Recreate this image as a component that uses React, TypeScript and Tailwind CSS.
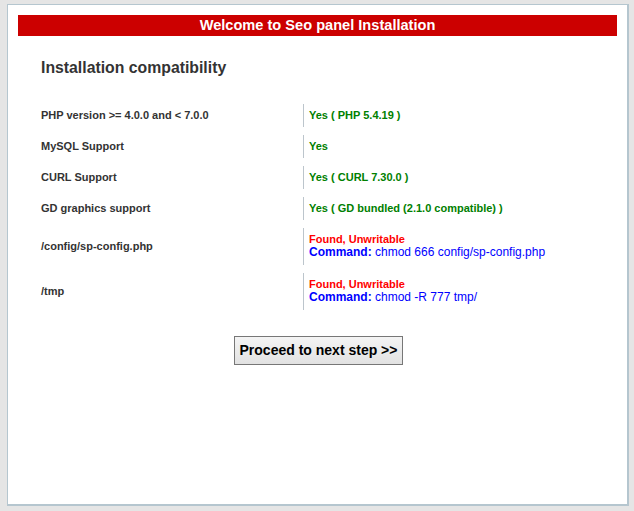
import React from "react";

const rows: { label: string; lines: React.ReactNode[] }[] = [
  { label: "PHP version >= 4.0.0 and < 7.0.0", lines: [<span className="text-[#008000] font-bold text-[11px]">Yes ( PHP 5.4.19 )</span>] },
  { label: "MySQL Support", lines: [<span className="text-[#008000] font-bold text-[11px]">Yes</span>] },
  { label: "CURL Support", lines: [<span className="text-[#008000] font-bold text-[11px]">Yes ( CURL 7.30.0 )</span>] },
  { label: "GD graphics support", lines: [<span className="text-[#008000] font-bold text-[11px]">Yes ( GD bundled (2.1.0 compatible) )</span>] },
  {
    label: "/config/sp-config.php",
    lines: [
      <span className="text-[#ff0000] font-bold text-[11px]">Found, Unwritable</span>,
      <span className="text-[#0000ff] text-[12px]"><b>Command:</b> chmod 666 config/sp-config.php</span>,
    ],
  },
  {
    label: "/tmp",
    lines: [
      <span className="text-[#ff0000] font-bold text-[11px]">Found, Unwritable</span>,
      <span className="text-[#0000ff] text-[12px]"><b>Command:</b> chmod -R 777 tmp/</span>,
    ],
  },
];

export default function App() {
  return (
    <div className="w-[634px] h-[511px] bg-[#e5e5e5] pt-[4px] pl-[7px] font-['Liberation_Sans',Arial,sans-serif]">
      <div className="w-[622px] h-[502px] bg-white border border-[#b5c6cf] border-r-2 border-b-2 px-[10px] pt-[10px]">
        <div className="h-[21px] bg-[#cc0000] text-white font-bold text-[14.6px] leading-[20px] text-center">
          Welcome to Seo panel Installation
        </div>
        <div className="pl-[23px] pt-[21px] text-[15.8px] font-bold text-[#333] leading-[22px]">
          Installation compatibility
        </div>
        <div className="flex flex-col gap-[8px] mt-[25px] ml-[23px]">
          {rows.map((r, i) => (
            <div key={i} className="flex items-stretch">
              <div className="w-[262px] flex items-center text-[11px] font-bold text-[#333]">{r.label}</div>
              <div className={`border-l border-[#bcc5cc] pl-[5px] flex flex-col justify-center ${r.lines.length > 1 ? "h-[37px] pb-[1px]" : "h-[23px]"}`}>
                {r.lines.map((l, j) => (
                  <div key={j} className="text-[11px] leading-[13.5px]">{l}</div>
                ))}
              </div>
            </div>
          ))}
        </div>
        <div className="flex justify-center mt-[26px] pl-[2px]">
          <button className="h-[29px] px-[5px] border border-[#777] bg-gradient-to-b from-[#f4f4f4] to-[#e2e2e2] text-[14px] font-bold text-black font-['Liberation_Sans',Arial,sans-serif]">
            Proceed to next step &gt;&gt;
          </button>
        </div>
      </div>
    </div>
  );
}
